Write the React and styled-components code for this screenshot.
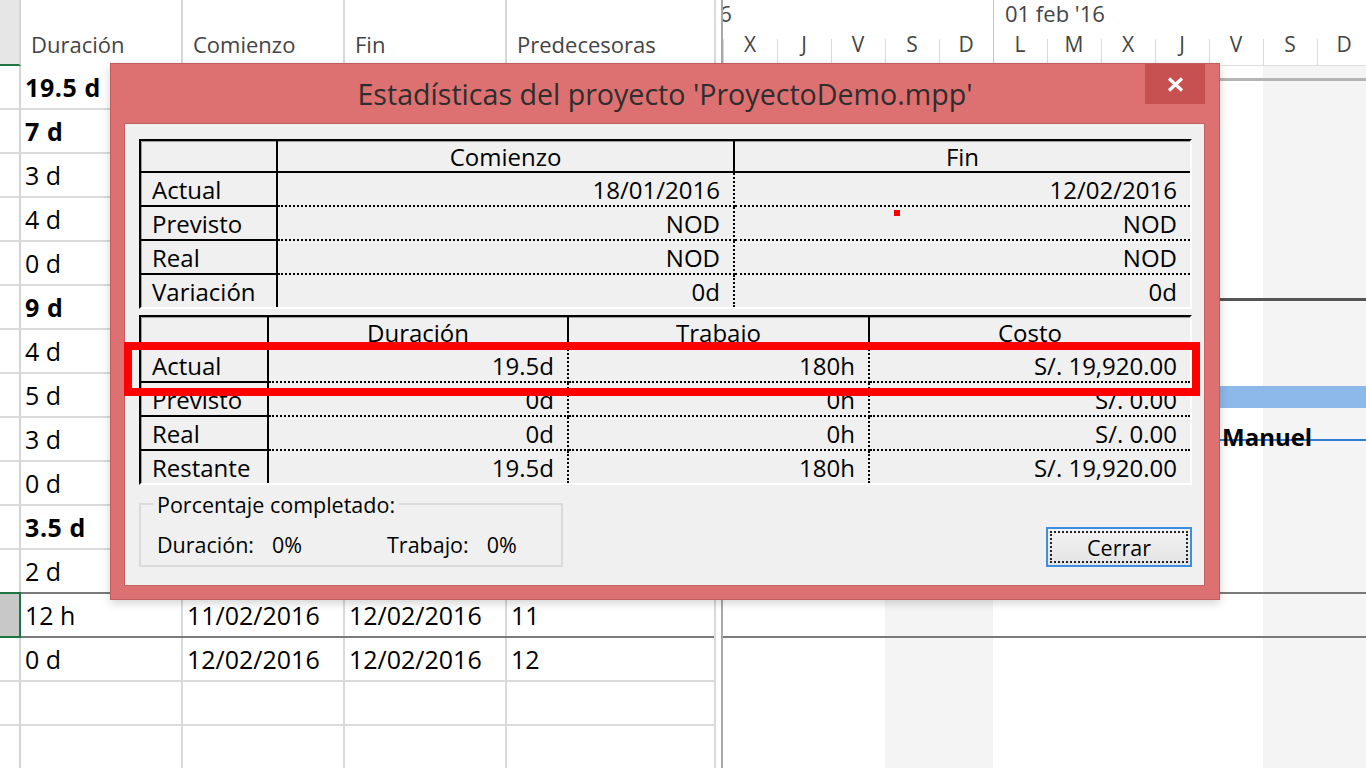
import React from 'react';
import styled, { createGlobalStyle } from 'styled-components';

const GlobalStyle = createGlobalStyle`
  html, body { margin: 0; padding: 0; background: #fff; }
  body { font-family: "Open Sans", "Noto Sans", sans-serif; overflow: hidden; }
  * { box-sizing: border-box; }
`;

const Page = styled.div`
  position: relative;
  width: 1366px;
  height: 768px;
  overflow: hidden;
  display: flex;
  background: #fff;
`;

/* ---------- Sheet ---------- */
const COLS = '21px 162px 162px 162px 207px';

const Sheet = styled.div`
  width: 714px;
  flex: none;
  display: flex;
  flex-direction: column;
`;

const HeaderRow = styled.div`
  display: grid;
  grid-template-columns: ${COLS};
  height: 66px;
  flex: none;
`;

const HeadCorner = styled.div`
  background: #e6e6e6;
  border-right: 2px solid #d4d4d4;
  border-bottom: 2px solid #217346;
`;

const ColHead = styled.div`
  display: flex;
  align-items: flex-end;
  padding: 0 0 7px 10px;
  font-size: 22px;
  color: #444;
  border-right: ${p => (p.$last ? 'none' : '2px solid #d9d9d9')};
`;

const SheetRow = styled.div`
  display: grid;
  grid-template-columns: ${COLS};
  height: 44px;
  flex: none;
  border-bottom: 2px solid ${p => (p.$dark ? '#7a7a7a' : '#dadada')};
`;

const RowHead = styled.div`
  border-right: 2px solid #d4d4d4;
  ${p =>
    p.$selected &&
    `
    position: relative;
    z-index: 1;
    margin: -2px 0 -2px 0;
    background: #c8c8c8;
    border: 2px solid #217346;
    border-left: none;
  `}
`;

const Cell = styled.div`
  display: flex;
  align-items: center;
  padding-left: 4px;
  font-size: 25px;
  font-weight: ${p => (p.$bold ? 700 : 400)};
  letter-spacing: ${p => (p.$bold ? '0.6px' : '0')};
  color: #000;
  white-space: nowrap;
  border-right: ${p => (p.$last ? 'none' : '2px solid #dadada')};
`;

const Splitter = styled.div`
  width: 9px;
  flex: none;
  border-left: 2px solid #dadada;
  border-right: 2px solid #a8a8a8;
`;

/* ---------- Gantt ---------- */
const Gantt = styled.div`
  flex: 1;
  display: flex;
  flex-direction: column;
  overflow: hidden;
`;

const Timescale = styled.div`
  height: 66px;
  flex: none;
  display: flex;
  flex-direction: column;
  border-bottom: 1px solid #dedede;
`;

const TopTier = styled.div`
  height: 30px;
  display: flex;
  margin-left: -108px;
`;

const WeekCell = styled.div`
  width: 378px;
  flex: none;
  border-left: 1px solid #c8c8c8;
  padding-left: 11px;
  font-size: 22px;
  line-height: 26px;
  color: #444;
  white-space: nowrap;
`;

const BottomTier = styled.div`
  flex: 1;
  display: flex;
`;

const DayCell = styled.div`
  width: 54px;
  flex: none;
  display: flex;
  justify-content: center;
  padding-top: 1px;
  font-size: 21px;
  line-height: 26px;
  color: #444;
  background: linear-gradient(${p => (p.$week ? '#c8c8c8, #c8c8c8' : '#d9d9d9, #d9d9d9')}) left
    bottom / 1px ${p => (p.$week ? '36px' : '26px')} no-repeat;
`;

const GanttBody = styled.div`
  flex: 1;
  display: grid;
  grid-template: 1fr / 1fr;
  & > * {
    grid-area: 1 / 1;
  }
`;

const Shade = styled.div`
  display: flex;
`;

const DayCol = styled.div`
  width: 54px;
  flex: none;
  background: ${p => (p.$weekend ? '#f4f4f4' : 'transparent')};
`;

const GanttRows = styled.div`
  display: flex;
  flex-direction: column;
`;

const GanttRow = styled.div`
  position: relative;
  height: 44px;
  flex: none;
  border-bottom: 2px solid ${p => (p.$dark ? '#7a7a7a' : 'transparent')};
`;

const SummaryLine = styled.div`
  position: absolute;
  top: 12px;
  height: 3px;
  right: 0;
  background: ${p => p.$color};
`;

const TaskBar = styled.div`
  position: absolute;
  top: 12px;
  height: 22px;
  right: 0;
  background: #8cb9e9;
`;

const LinkLine = styled.div`
  position: absolute;
  top: 21px;
  height: 2px;
  right: 0;
  background: #2e7fd2;
`;

const ResourceLabel = styled.span`
  position: absolute;
  top: 3px;
  font-size: 24px;
  font-weight: 700;
  color: #000;
  line-height: 32px;
`;

/* ---------- Dialog ---------- */
const Dialog = styled.div`
  position: absolute;
  left: 110px;
  top: 63px;
  width: 1110px;
  height: 537px;
  background: #dd7070;
  border: 1px solid #c25b5b;
  display: flex;
  flex-direction: column;
  box-shadow: 0 3px 9px rgba(0, 0, 0, 0.18);
`;

const TitleBar = styled.div`
  height: 59px;
  flex: none;
  display: grid;
  grid-template-columns: 74px 1fr 74px;
`;

const Title = styled.div`
  grid-column: 2;
  display: flex;
  align-items: center;
  justify-content: center;
  font-size: 28.6px;
  color: #2e2e2e;
  white-space: nowrap;
`;

const CloseButton = styled.div`
  grid-column: 3;
  width: 60px;
  height: 40px;
  background: #c75050;
  display: flex;
  align-items: center;
  justify-content: center;
`;

const Client = styled.div`
  flex: 1;
  min-height: 0;
  margin: 0 14px 13px 13px;
  border: 1px solid #c46262;
  background: #f0f0f0;
  padding: 15px 12px 18px 14px;
  display: flex;
  flex-direction: column;
  gap: 6px;
`;

const StatTable = styled.div`
  display: grid;
  flex: none;
  grid-template-columns: ${p => p.$cols};
  grid-template-rows: 32px repeat(${p => p.$data - 1}, 34px) 32px;
  border: 2px solid;
  border-color: #000 #fff #fff #000;
  box-shadow: inset 1px 1px 0 #9c9c9c;
  font-size: 24px;
  color: #000;
`;

const HeadCell = styled.div`
  display: flex;
  align-items: center;
  justify-content: center;
  border-bottom: 2px solid #000;
  border-right: ${p => (p.$last ? 'none' : '2px solid #000')};
  white-space: nowrap;
`;

const LabelCell = styled.div`
  display: flex;
  align-items: center;
  padding-left: 11px;
  border-right: 2px solid #000;
  border-bottom: ${p => (p.$lastRow ? 'none' : '2px solid #000')};
  white-space: nowrap;
`;

const ValueCell = styled.div`
  display: flex;
  align-items: center;
  justify-content: flex-end;
  padding-right: 13px;
  border-right: ${p => (p.$lastCol ? 'none' : '2px dotted #000')};
  border-bottom: ${p => (p.$lastRow ? 'none' : '2px dotted #000')};
  white-space: nowrap;
`;

const BottomRow = styled.div`
  margin-top: auto;
  display: flex;
  justify-content: space-between;
  align-items: flex-end;
`;

const GroupBox = styled.div`
  position: relative;
  width: 424px;
  height: 64px;
  border: 2px solid #dadada;
  padding: 25px 0 0 16px;
  display: flex;
  font-size: 21.5px;
  line-height: 30px;
  color: #000;
`;

const GroupLegend = styled.span`
  position: absolute;
  left: 12px;
  top: -15px;
  padding: 0 4px;
  background: #f0f0f0;
  line-height: 30px;
  white-space: nowrap;
`;

const StatItem = styled.div`
  flex: none;
  width: ${p => (p.$first ? '230px' : 'auto')};
  display: flex;
  gap: 18px;
  white-space: nowrap;
`;

const Button = styled.div`
  width: 146px;
  height: 40px;
  border: 2px solid #3c8ee0;
  background: linear-gradient(#f3f3f3, #e3e3e3);
  padding: 2px;
  font-size: 21.5px;
  color: #000;
`;

const FocusRing = styled.span`
  height: 100%;
  display: flex;
  align-items: center;
  justify-content: center;
  border: 2px dotted #222;
`;

const Highlight = styled.div`
  position: absolute;
  left: 13px;
  top: 278px;
  width: 1076px;
  height: 54px;
  border: 8px solid #ff0000;
  pointer-events: none;
`;

const RedDot = styled.div`
  position: absolute;
  left: 783px;
  top: 146px;
  width: 6px;
  height: 6px;
  background: #ff0000;
`;

/* ---------- Data ---------- */
const sheetRows = [
  { dur: '19.5 d', bold: true, start: '18/01/2016', end: '12/02/2016', pred: '' },
  { dur: '7 d', bold: true, start: '18/01/2016', end: '26/01/2016', pred: '' },
  { dur: '3 d', start: '18/01/2016', end: '20/01/2016', pred: '' },
  { dur: '4 d', start: '21/01/2016', end: '26/01/2016', pred: '3' },
  { dur: '0 d', start: '26/01/2016', end: '26/01/2016', pred: '4' },
  { dur: '9 d', bold: true, start: '27/01/2016', end: '08/02/2016', pred: '' },
  { dur: '4 d', start: '27/01/2016', end: '01/02/2016', pred: '5' },
  { dur: '5 d', start: '02/02/2016', end: '08/02/2016', pred: '7' },
  { dur: '3 d', start: '02/02/2016', end: '04/02/2016', pred: '7' },
  { dur: '0 d', start: '08/02/2016', end: '08/02/2016', pred: '8;9' },
  { dur: '3.5 d', bold: true, start: '09/02/2016', end: '12/02/2016', pred: '' },
  { dur: '2 d', start: '09/02/2016', end: '10/02/2016', pred: '10', dark: true },
  { dur: '12 h', start: '11/02/2016', end: '12/02/2016', pred: '11', dark: true, selected: true },
  { dur: '0 d', start: '12/02/2016', end: '12/02/2016', pred: '12' },
  {},
  {},
];

const weeks = ["25 ene '16", "01 feb '16", "08 feb '16"];
const days = ['X', 'J', 'V', 'S', 'D', 'L', 'M', 'X', 'J', 'V', 'S', 'D'];

const ganttRows = [
  { summary: { left: 0, color: '#b4b4b4' } },
  {},
  {},
  {},
  {},
  { summary: { left: 0, color: '#555555' } },
  {},
  { bar: { left: 380 } },
  { link: { left: 300 }, label: { left: 499, text: 'Manuel' } },
  {},
  {},
  { dark: true },
  { dark: true },
  {},
  {},
  {},
];

const table1 = {
  cols: '137px 457px 455px',
  head: ['', 'Comienzo', 'Fin'],
  rows: [
    ['Actual', '18/01/2016', '12/02/2016'],
    ['Previsto', 'NOD', 'NOD'],
    ['Real', 'NOD', 'NOD'],
    ['Variación', '0d', '0d'],
  ],
};

const table2 = {
  cols: '128px 300px 301px 320px',
  head: ['', 'Duración', 'Trabajo', 'Costo'],
  rows: [
    ['Actual', '19.5d', '180h', 'S/. 19,920.00'],
    ['Previsto', '0d', '0h', 'S/. 0.00'],
    ['Real', '0d', '0h', 'S/. 0.00'],
    ['Restante', '19.5d', '180h', 'S/. 19,920.00'],
  ],
};

function Stats({ data }) {
  const n = data.rows.length;
  return (
    <StatTable $cols={data.cols} $data={n}>
      {data.head.map((h, i) => (
        <HeadCell key={'h' + i} $last={i === data.head.length - 1}>
          {h}
        </HeadCell>
      ))}
      {data.rows.map((r, ri) =>
        r.map((v, ci) =>
          ci === 0 ? (
            <LabelCell key={ri + '-' + ci} $lastRow={ri === n - 1}>
              {v}
            </LabelCell>
          ) : (
            <ValueCell key={ri + '-' + ci} $lastRow={ri === n - 1} $lastCol={ci === r.length - 1}>
              {v}
            </ValueCell>
          )
        )
      )}
    </StatTable>
  );
}

export default function App() {
  return (
    <>
      <GlobalStyle />
      <Page>
        <Sheet>
          <HeaderRow>
            <HeadCorner />
            <ColHead>Duración</ColHead>
            <ColHead>Comienzo</ColHead>
            <ColHead>Fin</ColHead>
            <ColHead $last>Predecesoras</ColHead>
          </HeaderRow>
          {sheetRows.map((r, i) => (
            <SheetRow key={i} $dark={r.dark}>
              <RowHead $selected={r.selected} />
              <Cell $bold={r.bold}>{r.dur}</Cell>
              <Cell>{r.start}</Cell>
              <Cell>{r.end}</Cell>
              <Cell $last>{r.pred}</Cell>
            </SheetRow>
          ))}
        </Sheet>
        <Splitter />
        <Gantt>
          <Timescale>
            <TopTier>
              {weeks.map(w => (
                <WeekCell key={w}>{w}</WeekCell>
              ))}
            </TopTier>
            <BottomTier>
              {days.map((d, i) => (
                <DayCell key={i} $week={d === 'L'}>
                  {d}
                </DayCell>
              ))}
            </BottomTier>
          </Timescale>
          <GanttBody>
            <Shade>
              {days.map((d, i) => (
                <DayCol key={i} $weekend={d === 'S' || d === 'D'} />
              ))}
            </Shade>
            <GanttRows>
              {ganttRows.map((g, i) => (
                <GanttRow key={i} $dark={g.dark}>
                  {g.summary && <SummaryLine $color={g.summary.color} style={{ left: g.summary.left }} />}
                  {g.bar && <TaskBar style={{ left: g.bar.left }} />}
                  {g.link && <LinkLine style={{ left: g.link.left }} />}
                  {g.label && <ResourceLabel style={{ left: g.label.left }}>{g.label.text}</ResourceLabel>}
                </GanttRow>
              ))}
            </GanttRows>
          </GanttBody>
        </Gantt>

        <Dialog>
          <TitleBar>
            <Title>Estadísticas del proyecto 'ProyectoDemo.mpp'</Title>
            <CloseButton>
              <svg width="17" height="15" viewBox="0 0 17 15">
                <path d="M2 1.5 L15 13.5 M15 1.5 L2 13.5" stroke="#fff" strokeWidth="3.2" fill="none" />
              </svg>
            </CloseButton>
          </TitleBar>
          <Client>
            <Stats data={table1} />
            <Stats data={table2} />
            <BottomRow>
              <GroupBox>
                <GroupLegend>Porcentaje completado:</GroupLegend>
                <StatItem $first>
                  <span>Duración:</span>
                  <span>0%</span>
                </StatItem>
                <StatItem>
                  <span>Trabajo:</span>
                  <span>0%</span>
                </StatItem>
              </GroupBox>
              <Button>
                <FocusRing>Cerrar</FocusRing>
              </Button>
            </BottomRow>
          </Client>
          <Highlight />
          <RedDot />
        </Dialog>
      </Page>
    </>
  );
}
